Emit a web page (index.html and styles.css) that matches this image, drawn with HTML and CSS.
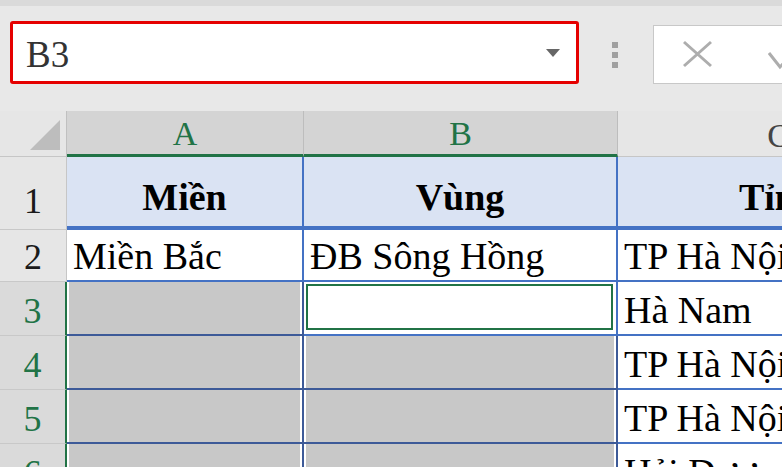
FILE: index.html
```html
<!DOCTYPE html>
<html lang="vi">
	<head>
		<meta charset="UTF-8" />
		<meta name="viewport" content="width=device-width, initial-scale=1.0" />
		<title>Bảng tính - Miền / Vùng / Tỉnh</title>
		<link rel="stylesheet" href="styles.css">
	</head>

	<body>
		<!-- barre de formule : zone de nom + boutons -->
		<header class="formula-bar">
			<div class="name-box">
				<span class="name">B3</span>
				<span class="arrow"></span>
			</div>

			<div class="grip"><i></i><i></i><i></i></div>

			<div class="fx-buttons">
				<svg width="31" height="28" viewBox="0 0 31 28">
					<path d="M2 2 L29 26 M29 2 L2 26" stroke="#adadad" stroke-width="3" fill="none" />
				</svg>
				<svg width="40" height="30" viewBox="0 0 40 30">
					<path d="M1 13 L12 27 L38 0" stroke="#adadad" stroke-width="3" fill="none" />
				</svg>
			</div>
		</header>

		<!-- la feuille -->
		<main class="sheet">
			<div class="corner">
				<svg width="30" height="30" viewBox="0 0 30 30">
					<polygon points="30,0 30,30 0,30" fill="#bdbdbd" />
				</svg>
			</div>
			<div class="col-head sel">A</div>
			<div class="col-head sel">B</div>
			<div class="col-head">C</div>

			<div class="row-head first">1</div>
			<div class="cell title">Miền</div>
			<div class="cell title">Vùng</div>
			<div class="cell title">Tỉnh</div>

			<div class="row-head">2</div>
			<div class="cell">Miền Bắc</div>
			<div class="cell">ĐB Sông Hồng</div>
			<div class="cell">TP Hà Nội</div>

			<div class="row-head sel">3</div>
			<div class="cell fill"></div>
			<div class="cell active"><div class="cursor"></div></div>
			<div class="cell">Hà Nam</div>

			<div class="row-head sel">4</div>
			<div class="cell fill"></div>
			<div class="cell fill"></div>
			<div class="cell">TP Hà Nội</div>

			<div class="row-head sel">5</div>
			<div class="cell fill"></div>
			<div class="cell fill"></div>
			<div class="cell">TP Hà Nội</div>

			<div class="row-head sel">6</div>
			<div class="cell fill"></div>
			<div class="cell fill"></div>
			<div class="cell">Hải Dương</div>
		</main>
	</body>
</html>
```

FILE: styles.css
```css
body {
	margin: 0;
	padding: 0;
	width: 782px;
	height: 467px;
	overflow: hidden;
	background-color: #e8e8e8;
	font-family: "Liberation Serif", "Times New Roman", serif;
}

/* barre de formule */
.formula-bar {
	box-sizing: border-box;
	height: 111px;
	border-top: 6px solid #dadada;
	padding-top: 15px;
	display: flex;
	align-items: flex-start;
	background-color: #e8e8e8;
}
.name-box {
	box-sizing: border-box;
	flex-shrink: 0;
	width: 569px;
	height: 63px;
	margin-left: 10px;
	padding: 4px 16px 0 13px;
	border: 3px solid #e50000;
	border-radius: 3px;
	background-color: #fff;
	display: flex;
	align-items: center;
	justify-content: space-between;
}
.name {
	font-size: 37px;
	line-height: 40px;
	color: #333;
}
.arrow {
	width: 0;
	height: 0;
	margin-top: -3px;
	border-left: 7px solid transparent;
	border-right: 7px solid transparent;
	border-top: 8px solid #666;
}
.grip {
	flex-shrink: 0;
	margin: 21px 0 0 33px;
	display: flex;
	flex-direction: column;
	gap: 4px;
}
.grip i {
	display: block;
	width: 6px;
	height: 6px;
	background-color: #a0a0a0;
}
.fx-buttons {
	box-sizing: border-box;
	flex: 1;
	min-width: 0;
	height: 59px;
	margin: 4px 0 0 35px;
	padding: 14px 0 0 28px;
	border: 1px solid #c8c8c8;
	border-right: none;
	background-color: #fff;
	display: flex;
	align-items: flex-start;
	gap: 55px;
	overflow: hidden;
}
.fx-buttons svg {
	flex-shrink: 0;
}

/* grille */
.sheet {
	display: grid;
	grid-template-columns: 67px 237px 314px 322px;
	grid-template-rows: 46px 73px 52px 54px 54px 54px 54px;
}
.sheet > div {
	box-sizing: border-box;
	white-space: nowrap;
	overflow: hidden;
}
.corner {
	background-color: #e6e6e6;
	border-right: 1px solid #c0c0c0;
	border-bottom: 1px solid #c6c6c6;
	padding: 0 6px 6px 0;
	display: flex;
	justify-content: flex-end;
	align-items: flex-end;
}
.col-head {
	display: flex;
	justify-content: center;
	align-items: flex-end;
	padding-bottom: 2px;
	font-size: 34px;
	line-height: 36px;
	color: #444;
	background-color: #e6e6e6;
	border-right: 1px solid #bdbdbd;
	border-bottom: 1px solid #c6c6c6;
}
.col-head.sel {
	color: #217346;
	background-color: #d4d4d4;
	border-bottom: 3px solid #217346;
}
.row-head {
	display: flex;
	justify-content: center;
	align-items: flex-end;
	padding-bottom: 4px;
	font-size: 36px;
	line-height: 40px;
	color: #1a1a1a;
	background-color: #e6e6e6;
	border-right: 1px solid #c6c6c6;
	border-bottom: 1px solid #c8c8c8;
}
.row-head.first {
	padding-bottom: 8px;
}
.row-head.sel {
	color: #217346;
	background-color: #dadada;
	border-right: 2px solid #217346;
}
.cell {
	display: flex;
	align-items: flex-end;
	padding: 0 0 4px 6px;
	font-size: 38px;
	line-height: 40px;
	color: #000;
	background-color: #fff;
	border-right: 2px solid #4472c4;
	border-bottom: 2px solid #4472c4;
}
.cell.title {
	justify-content: center;
	padding: 0 0 9px 0;
	font-weight: bold;
	background-color: #dae3f3;
	border-bottom-width: 4px;
}
.cell.fill {
	background-color: #c8c8c8;
	border-color: #3d5a98;
	box-shadow: inset 2px 0 0 #fff, inset -2px 0 0 #fff;
}
.cell.active {
	padding: 2px 3px 4px 2px;
}
.cursor {
	flex: 1;
	align-self: stretch;
	border: 2px solid #217346;
}
```
